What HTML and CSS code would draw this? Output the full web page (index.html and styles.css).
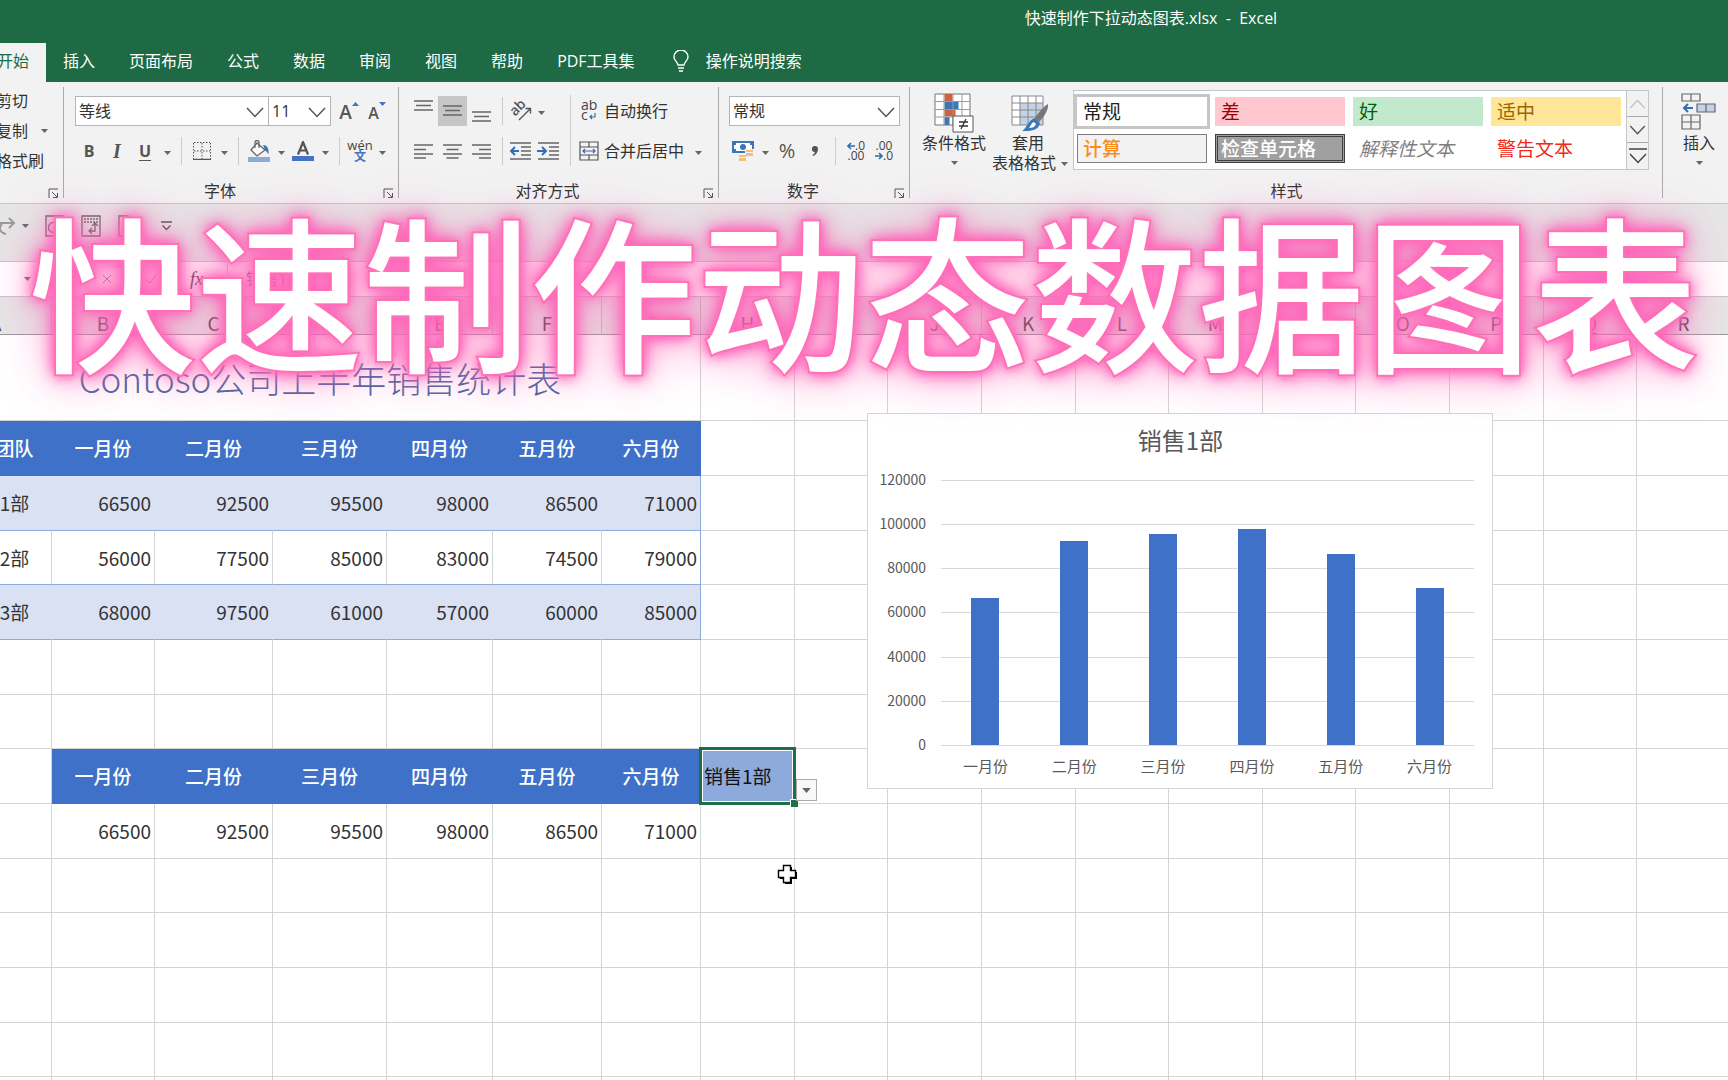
FILE: index.html
```html
<!DOCTYPE html>
<html lang="zh-CN">
<head>
<meta charset="utf-8">
<title>快速制作下拉动态图表.xlsx - Excel</title>
<link rel="stylesheet" href="styles.css">
</head>
<body>
<svg class="defs" width="0" height="0" aria-hidden="true">
  <symbol id="caret" viewBox="0 0 7 4"><path d="M0 0h7L3.500 4z" fill="#666"/></symbol>
  <symbol id="chev" viewBox="0 0 18 11"><path d="M1 1l8 8.500L17 1" fill="none" stroke="#555" stroke-width="1.500"/></symbol>
  <symbol id="launch" viewBox="0 0 11 11"><path d="M1 10V1h9M4 4l5 5M9.500 5v4.500H5" fill="none" stroke="#555"/></symbol>
</svg>

<header class="titlebar"><span>快速制作下拉动态图表.xlsx&nbsp; -&nbsp; Excel</span></header>

<nav class="tabs">
  <button class="tab active">开始</button>
  <button class="tab">插入</button>
  <button class="tab">页面布局</button>
  <button class="tab">公式</button>
  <button class="tab">数据</button>
  <button class="tab">审阅</button>
  <button class="tab">视图</button>
  <button class="tab">帮助</button>
  <button class="tab">PDF工具集</button>
  <button class="tab tell">
    <svg width="16" height="22" viewBox="0 0 16 22" fill="none" stroke="#fff" stroke-width="1.400"><path d="M5 15c0-3-4-4-4-8a7 7 0 0 1 14 0c0 4-4 5-4 8zM5 18h6M6 21h4"/></svg>
    操作说明搜索
  </button>
</nav>

<section class="ribbon">
  <div class="group clipboard">
    <div class="clip-list">
      <button>剪切</button>
      <button>复制<svg class="caret"><use href="#caret"/></svg></button>
      <button>格式刷</button>
    </div>
    <footer><span></span><button class="launch" aria-label="剪贴板设置"><svg><use href="#launch"/></svg></button></footer>
  </div>

  <div class="group font">
    <div class="body rows">
      <div class="row">
        <label class="combo name"><select aria-label="字体"><option>等线</option></select><svg><use href="#chev"/></svg></label>
        <label class="combo size"><select aria-label="字号"><option>11</option></select><svg><use href="#chev"/></svg></label>
        <button class="ib grow" aria-label="增大字号"><span class="a-big">A</span><svg width="7" height="4" viewBox="0 0 7 4"><path d="M0 4h7L3.500 0z" fill="#4472c4"/></svg></button>
        <button class="ib grow" aria-label="减小字号"><span class="a-small">A</span><svg width="7" height="4" viewBox="0 0 7 4"><path d="M0 0h7L3.500 4z" fill="#4472c4"/></svg></button>
      </div>
      <div class="row">
        <button class="ib bold">B</button>
        <button class="ib italic">I</button>
        <button class="ib underline">U</button>
        <button class="dd" aria-label="下划线样式"><svg class="caret"><use href="#caret"/></svg></button>
        <i class="sep"></i>
        <button class="ib" aria-label="边框"><svg width="18" height="18" viewBox="0 0 18 18" fill="none" stroke="#555"><path d="M1 .5h16M.5 1v16M17.500 1v16M9 1v16M1 9h16" stroke-dasharray="1.500 1.500"/><path d="M0 17.500h18" stroke-width="1.500"/></svg></button>
        <button class="dd" aria-label="边框样式"><svg class="caret"><use href="#caret"/></svg></button>
        <i class="sep"></i>
        <button class="ib" aria-label="填充颜色"><svg width="22" height="22" viewBox="0 0 22 22"><path d="M0 17h22v5H0z" fill="#8ea9db"/><path d="M9 3l8 7-8 6-6-6z" fill="#fff" stroke="#666" stroke-width="1.300"/><path d="M7 8V2.500a2 2 0 0 1 4 0V8" fill="none" stroke="#666" stroke-width="1.300"/><path d="M15 5c4 0 6 3 5.500 9-1.500-1-2-3-3.500-4z" fill="#3a76b8"/></svg></button>
        <button class="dd" aria-label="选择填充颜色"><svg class="caret"><use href="#caret"/></svg></button>
        <button class="ib" aria-label="字体颜色"><svg width="22" height="20" viewBox="0 0 22 20"><path d="M0 15h22v5H0z" fill="#4472c4"/><path d="M6 13.500L11 1l5 12.500M8 9.500h6" fill="none" stroke="#555" stroke-width="2.200"/></svg></button>
        <button class="dd" aria-label="选择字体颜色"><svg class="caret"><use href="#caret"/></svg></button>
        <i class="sep"></i>
        <button class="ib wen"><span>wén</span><b>文</b></button>
        <button class="dd" aria-label="拼音选项"><svg class="caret"><use href="#caret"/></svg></button>
      </div>
    </div>
    <footer><span>字体</span><button class="launch" aria-label="字体设置"><svg><use href="#launch"/></svg></button></footer>
  </div>

  <div class="group align">
    <div class="body">
      <div class="rows left">
        <div class="row">
          <button class="ib al" aria-label="顶端对齐"><svg width="19" height="30" viewBox="0 0 19 30" stroke="#666" stroke-width="1.400"><path d="M0 5h19M2 9.500h15M0 14h19"/></svg></button>
          <button class="ib al on" aria-label="垂直居中"><svg width="19" height="30" viewBox="0 0 19 30" stroke="#666" stroke-width="1.400"><path d="M0 10h19M2 14.500h15M0 19h19"/></svg></button>
          <button class="ib al" aria-label="底端对齐"><svg width="19" height="30" viewBox="0 0 19 30" stroke="#666" stroke-width="1.400"><path d="M0 16h19M2 20.500h15M0 25h19"/></svg></button>
          <i class="sep"></i>
          <button class="ib orient" aria-label="方向"><svg width="22" height="22" viewBox="0 0 22 22"><text x="0" y="13" transform="rotate(-45 7 9)" font-family="Open Sans" font-size="14" font-weight="600" fill="#555">ab</text><path d="M9 20L20 9M15.500 8.500H20.500V13.500" fill="none" stroke="#555" stroke-width="1.400"/></svg></button>
          <button class="dd" aria-label="方向选项"><svg class="caret"><use href="#caret"/></svg></button>
        </div>
        <div class="row">
          <button class="ib al" aria-label="左对齐"><svg width="19" height="15" viewBox="0 0 19 15" stroke="#666" stroke-width="1.400"><path d="M0 1h19M0 5.500h12M0 10h19M0 14h12"/></svg></button>
          <button class="ib al" aria-label="居中"><svg width="19" height="15" viewBox="0 0 19 15" stroke="#666" stroke-width="1.400"><path d="M0 1h19M3.500 5.500h12M0 10h19M3.500 14h12"/></svg></button>
          <button class="ib al" aria-label="右对齐"><svg width="19" height="15" viewBox="0 0 19 15" stroke="#666" stroke-width="1.400"><path d="M0 1h19M7 5.500h12M0 10h19M7 14h12"/></svg></button>
          <i class="sep"></i>
          <button class="ib indent" aria-label="减少缩进量"><svg width="22" height="18" viewBox="0 0 22 18" fill="none" stroke="#666" stroke-width="1.400"><path d="M1 1h21M12 5h10M12 9h10M12 13h10M1 17h21"/><path d="M10 9H2M6 5L2 9l4 4" stroke="#2f6fb3" stroke-width="2"/></svg></button>
          <button class="ib indent" aria-label="增加缩进量"><svg width="22" height="18" viewBox="0 0 22 18" fill="none" stroke="#666" stroke-width="1.400"><path d="M1 1h21M12 5h10M12 9h10M12 13h10M1 17h21"/><path d="M0 9h8M5 5l4 4-4 4" stroke="#2f6fb3" stroke-width="2"/></svg></button>
        </div>
      </div>
      <div class="rows right">
        <div class="row"><button class="tb"><svg width="20" height="22" viewBox="0 0 20 22"><text x="2" y="10" font-family="Open Sans" font-size="14" fill="#444">ab</text><text x="2" y="20" font-family="Open Sans" font-size="14" fill="#444">c</text><path d="M16 13v4h-5M13 15l-2 2 2 2" fill="none" stroke="#2f6fb3" stroke-width="1.200"/></svg>自动换行</button></div>
        <div class="row"><button class="tb"><svg width="20" height="20" viewBox="0 0 20 20" fill="none" stroke="#555" stroke-width="1.200"><path d="M1 1h18v18H1zM1 6h18M1 14h18M10 1v5M10 14v5"/><path d="M4 10h12M6 8l-2 2 2 2M14 8l2 2-2 2" stroke="#4a5fb0"/></svg>合并后居中</button><button class="dd" aria-label="合并选项"><svg class="caret"><use href="#caret"/></svg></button></div>
      </div>
    </div>
    <footer><span>对齐方式</span><button class="launch" aria-label="对齐设置"><svg><use href="#launch"/></svg></button></footer>
  </div>

  <div class="group number">
    <div class="body rows">
      <div class="row"><label class="combo fmt"><select aria-label="数字格式"><option>常规</option></select><svg><use href="#chev"/></svg></label></div>
      <div class="row">
        <button class="ib" aria-label="会计数字格式"><svg width="22" height="22" viewBox="0 0 22 22"><path d="M1 2h20v10H1z" fill="#fff" stroke="#3a76b8" stroke-width="2"/><circle cx="11" cy="7" r="3" fill="#3a76b8"/><path d="M1 2h3v3H1zM18 2h3v3h-3zM1 9h3v3H1z" fill="#3a76b8"/><path d="M13 9h9v8h-5v4H6v-7h7z" fill="#f2f2f2"/><path d="M14 10h7v2h-7zM14 13h7v3h-7zM7 15h7v2H7zM7 18h7v3H7z" fill="#f4bd7a"/></svg></button>
        <button class="dd" aria-label="会计格式选项"><svg class="caret"><use href="#caret"/></svg></button>
        <button class="ib pct">%</button>
        <button class="ib comma" aria-label="千位分隔样式"><svg width="8" height="10" viewBox="0 0 8 10"><path d="M4 0a3 3 0 0 1 3 3c0 3-2 6-5 7l-.5-1c1.500-.8 2.300-1.800 2.300-3A3 3 0 0 1 4 0z" fill="#555"/></svg></button>
        <i class="sep"></i>
        <button class="ib dec"><span><svg width="8" height="8" viewBox="0 0 8 8"><path d="M8 4H1M4 1L1 4l3 3" fill="none" stroke="#2f6fb3" stroke-width="1.600"/></svg>.0</span><span>.00</span></button>
        <button class="ib dec"><span>.00</span><span><svg width="8" height="8" viewBox="0 0 8 8"><path d="M0 4h7M4 1l3 3-3 3" fill="none" stroke="#2f6fb3" stroke-width="1.600"/></svg>.0</span></button>
      </div>
    </div>
    <footer><span>数字</span><button class="launch" aria-label="数字设置"><svg><use href="#launch"/></svg></button></footer>
  </div>

  <div class="group styles">
    <div class="body">
      <button class="big">
        <svg width="40" height="42" viewBox="0 0 40 42"><path d="M1 3h35v31H1z" fill="#fff" stroke="#777"/><path d="M10.500 3h8v7h-8zM10.500 18.500h11v7h-11z" fill="#d2603f"/><path d="M10.500 10.500h14v7.500h-14zM10.500 26h5v8h-5z" fill="#3a76b8"/><path d="M10 3v31M19 3v31M28 3v31M1 10.500h35M1 18.500h35M1 26h35" stroke="#999" fill="none"/><path d="M19 25h20v16H19z" fill="#fff" stroke="#555"/><path d="M25 31h9M25 35h9M32 28l-5 10" stroke="#333" stroke-width="1.300" fill="none"/></svg>
        <span>条件格式</span><svg class="caret"><use href="#caret"/></svg>
      </button>
      <button class="big wide">
        <svg width="40" height="42" viewBox="0 0 40 42"><path d="M2 5h31v29H2z" fill="#fff"/><path d="M10 12h23v22H10z" fill="#c3d2e6"/><path d="M2 5h31v29H2zM2 12h31M2 19h31M2 26h31M10 5v29M18 5v29M26 5v29" stroke="#888" fill="none"/><path d="M38 13c1 6-5 14-9 18l-4-4c3-5 8-11 13-14z" fill="#777"/><path d="M25 27l5 5c-2 8-9 8-18 8 5-3 6-11 13-13z" fill="#3a76b8"/><path d="M24 31c-3 1-3 4-5 6 3 0 6-1 7-4z" fill="#fff"/></svg>
        <span>套用</span><span class="line">表格格式<svg class="caret"><use href="#caret"/></svg></span>
      </button>
      <div class="gallery">
        <div class="tiles">
          <button class="tile normal">常规</button>
          <button class="tile bad">差</button>
          <button class="tile good">好</button>
          <button class="tile neutral">适中</button>
          <button class="tile calc">计算</button>
          <button class="tile check">检查单元格</button>
          <button class="tile note">解释性文本</button>
          <button class="tile warn">警告文本</button>
        </div>
        <div class="scroller">
          <button class="off" aria-label="上一行"><svg width="17" height="10" viewBox="0 0 18 11"><path d="M1 10l8-8.500L17 10" fill="none" stroke="#bbb" stroke-width="1.400"/></svg></button>
          <button aria-label="下一行"><svg width="17" height="10"><use href="#chev"/></svg></button>
          <button aria-label="更多样式"><svg width="18" height="17" viewBox="0 0 18 17"><path d="M0 1h18M1 6l8 8.500L17 6" fill="none" stroke="#444" stroke-width="1.500"/></svg></button>
        </div>
      </div>
    </div>
    <footer><span>样式</span></footer>
  </div>

  <div class="group cells">
    <div class="body">
      <button class="big">
        <svg width="36" height="42" viewBox="0 0 36 42" fill="none" stroke="#666" stroke-width="1.200"><path d="M1 3h18v7H1zM10 3v7M1 24h18v14H1zM1 31h18M10 24v14"/><path d="M16 13h18v8H16z" fill="#c3d2e6"/><path d="M25 13v8"/><path d="M12 17H3M7 13l-4 4 4 4" stroke="#2f6fb3" stroke-width="2"/></svg>
        <span>插入</span><svg class="caret"><use href="#caret"/></svg>
      </button>
    </div>
    <footer><span></span></footer>
  </div>
</section>

<div class="qat">
  <button class="redo" aria-label="恢复"><svg width="16" height="20" viewBox="0 0 16 20" fill="none" stroke="#999" stroke-width="2"><path d="M0 7h13M9 2l5 5-5 5M2 8c-4 4-2 9 4 10"/></svg></button>
  <svg class="caret"><use href="#caret"/></svg>
  <button aria-label="打印预览"><svg width="19" height="22" viewBox="0 0 19 22" fill="none" stroke="#666" stroke-width="1.300"><path d="M1 1h17v20H1zM12 9a5 5 0 1 0 0 7"/></svg></button>
  <button aria-label="数据透视"><svg width="20" height="22" viewBox="0 0 20 22" fill="none" stroke="#666" stroke-width="1.300"><path d="M1 1h18v20H1z"/><path d="M3 4h14M3 7h14" stroke-dasharray="2 1"/><path d="M14 9v7H8M11 13l-3 3 3 3M11 11l3-3 3 3"/></svg></button>
  <button aria-label="新建"><svg width="17" height="22" viewBox="0 0 17 22" fill="none" stroke="#666" stroke-width="1.300"><path d="M1 21V1h9l6 6v14z"/></svg></button>
  <button class="more" aria-label="自定义快速访问工具栏"><svg width="11" height="10" viewBox="0 0 11 10" fill="none" stroke="#555" stroke-width="1.400"><path d="M0 1h11M1.500 4.500l4 4 4-4"/></svg></button>
</div>

<div class="formula">
  <div class="namebox"><svg class="caret"><use href="#caret"/></svg></div>
  <div class="fx"><svg width="10" height="10" viewBox="0 0 10 10" stroke="#777"><path d="M1 1l8 8M9 1L1 9"/></svg><svg width="12" height="10" viewBox="0 0 12 10" fill="none" stroke="#777"><path d="M1 5l4 4 6-8"/></svg><em>fx</em></div>
  <input class="formula-input" aria-label="编辑栏" value="销售1部">
</div>

<main class="sheet">
  <table class="grid">
    <colgroup><col class="ca"><col class="cb"><col class="cc"><col class="cd"><col class="ce"><col class="cf"><col class="cg"><col><col><col><col><col><col><col><col><col><col><col></colgroup>
    <thead><tr><th>A</th><th>B</th><th>C</th><th>D</th><th>E</th><th>F</th><th>G</th><th>H</th><th>I</th><th>J</th><th>K</th><th>L</th><th>M</th><th>N</th><th>O</th><th>P</th><th>Q</th><th>R</th></tr></thead>
    <tbody>
      <tr class="caption"><td colspan="7">Contoso公司上半年销售统计表</td><td></td><td></td><td></td><td></td><td></td><td></td><td></td><td></td><td></td><td></td><td></td></tr>
      <tr><td class="h">销售团队</td><td class="h">一月份</td><td class="h">二月份</td><td class="h">三月份</td><td class="h">四月份</td><td class="h">五月份</td><td class="h">六月份</td><td></td><td></td><td></td><td></td><td></td><td></td><td></td><td></td><td></td><td></td><td></td></tr>
      <tr><td class="t b">销售1部</td><td class="b">66500</td><td class="b">92500</td><td class="b">95500</td><td class="b">98000</td><td class="b">86500</td><td class="b e">71000</td><td></td><td></td><td></td><td></td><td></td><td></td><td></td><td></td><td></td><td></td><td></td></tr>
      <tr><td class="t w">销售2部</td><td class="w">56000</td><td class="w">77500</td><td class="w">85000</td><td class="w">83000</td><td class="w">74500</td><td class="w e">79000</td><td></td><td></td><td></td><td></td><td></td><td></td><td></td><td></td><td></td><td></td><td></td></tr>
      <tr><td class="t b">销售3部</td><td class="b">68000</td><td class="b">97500</td><td class="b">61000</td><td class="b">57000</td><td class="b">60000</td><td class="b e">85000</td><td></td><td></td><td></td><td></td><td></td><td></td><td></td><td></td><td></td><td></td><td></td></tr>
      <tr><td></td><td></td><td></td><td></td><td></td><td></td><td></td><td></td><td></td><td></td><td></td><td></td><td></td><td></td><td></td><td></td><td></td><td></td></tr>
      <tr><td></td><td></td><td></td><td></td><td></td><td></td><td></td><td></td><td></td><td></td><td></td><td></td><td></td><td></td><td></td><td></td><td></td><td></td></tr>
      <tr><td></td><td class="h">一月份</td><td class="h">二月份</td><td class="h">三月份</td><td class="h">四月份</td><td class="h">五月份</td><td class="h">六月份</td><td class="sel">销售1部<i class="frame"></i><i class="handle"></i><button class="drop" aria-label="选择部门"><svg width="9" height="5" viewBox="0 0 7 4"><use href="#caret"/></svg></button></td><td></td><td></td><td></td><td></td><td></td><td></td><td></td><td></td><td></td><td></td></tr>
      <tr><td></td><td>66500</td><td>92500</td><td>95500</td><td>98000</td><td>86500</td><td>71000</td><td></td><td></td><td></td><td></td><td></td><td></td><td></td><td></td><td></td><td></td><td></td></tr>
      <tr><td></td><td></td><td></td><td></td><td></td><td></td><td></td><td></td><td></td><td></td><td></td><td></td><td></td><td></td><td></td><td></td><td></td><td></td></tr>
      <tr><td></td><td></td><td></td><td></td><td></td><td></td><td></td><td></td><td></td><td></td><td></td><td></td><td></td><td></td><td></td><td></td><td></td><td></td></tr>
      <tr><td></td><td></td><td></td><td></td><td></td><td></td><td></td><td></td><td></td><td></td><td></td><td></td><td></td><td></td><td></td><td></td><td></td><td></td></tr>
      <tr><td></td><td></td><td></td><td></td><td></td><td></td><td></td><td></td><td></td><td></td><td></td><td></td><td></td><td></td><td></td><td></td><td></td><td></td></tr>
      <tr><td></td><td></td><td></td><td></td><td></td><td></td><td></td><td></td><td></td><td></td><td></td><td></td><td></td><td></td><td></td><td></td><td></td><td></td></tr>
    </tbody>
  </table>

  <figure class="chart">
    <figcaption>销售1部</figcaption>
    <div class="plot">
      <div class="axis"><span>120000</span><span>100000</span><span>80000</span><span>60000</span><span>40000</span><span>20000</span><span>0</span></div>
      <div class="area">
        <div class="bars">
          <i style="height:55.4%"></i><i style="height:77.1%"></i><i style="height:79.6%"></i><i style="height:81.7%"></i><i style="height:72.1%"></i><i style="height:59.2%"></i>
        </div>
        <div class="cats"><span>一月份</span><span>二月份</span><span>三月份</span><span>四月份</span><span>五月份</span><span>六月份</span></div>
      </div>
    </div>
  </figure>

  <svg class="cursor" width="21" height="21" viewBox="0 0 21 21"><path d="M8 3h7v5h5v7h-5v5H8v-5H3V8h5z" fill="#000"/><path d="M6.500 1.500h7v5h5v7h-5v5h-7v-5h-5v-7h5z" fill="#fff" stroke="#000" stroke-width="1.400"/></svg>
</main>

<h1 class="headline">快速制作动态数据图表</h1>
</body>
</html>
```
FILE: styles.css
```css
* { box-sizing: border-box; }

body {
  margin: 0;
  height: 100vh;
  display: flex;
  flex-direction: column;
  position: relative;
  overflow: hidden;
  background: #fff;
  color: #333;
  font: 16px/20px "Open Sans", "Noto Sans CJK SC", sans-serif;
}

button, select, input {
  margin: 0;
  padding: 0;
  border: 0;
  background: none;
  color: inherit;
  font: inherit;
}

svg { flex: none; display: block; }
.defs { position: absolute; }
.caret { width: 7px; height: 4px; }

/* title and tabs */
.titlebar {
  height: 43px;
  padding: 8px 0 0 574px;
  background: #1d6a45;
  color: #fff;
  font-size: 16px;
  text-align: center;
}
.tabs {
  display: flex;
  height: 39px;
  padding: 0;
  background: #1d6a45;
}
.tab { padding: 0 17px 3px; color: #fff; white-space: nowrap; }
.tab:first-child { margin-left: -20px; }
.tab.active { background: #f2f2f2; color: #1d6a45; }
.tab.tell { display: flex; align-items: center; gap: 17px; padding-left: 21px; }

/* ribbon */
.ribbon {
  display: flex;
  height: 122px;
  background: #f2f2f2;
  border-bottom: 1px solid #c6c6c6;
}
.group {
  display: flex;
  flex-direction: column;
  flex: none;
  padding-top: 8px;
  position: relative;
}
.group::after {
  content: "";
  position: absolute;
  right: 0;
  top: 5px;
  bottom: 5px;
  width: 1px;
  background: #aaa;
}
.clipboard { width: 64px; }
.font { width: 335px; }
.align { width: 320px; }
.number { width: 191px; }
.styles { flex: 1; }
.cells { width: 65px; }
.cells::after { display: none; }

.group footer {
  display: flex;
  align-items: center;
  height: 20px;
  margin-top: 11px;
}
.group footer span { flex: 1; text-align: center; }
.launch { width: 23px; height: 20px; padding: 4px 0 0 7px; }
.launch svg { width: 11px; height: 11px; }

.clip-list {
  display: flex;
  flex-direction: column;
  height: 80px;
  margin-left: -4px;
}
.clip-list button {
  display: flex;
  flex: none;
  align-items: center;
  gap: 13px;
  height: 30px;
  padding-bottom: 8px;
  white-space: nowrap;
}

.body { display: flex; height: 80px; }
.rows { display: flex; flex-direction: column; gap: 6px; padding-top: 4px; }
.row { display: flex; align-items: center; height: 34px; }
.font .body { padding-left: 11px; }
.number .body { padding-left: 10px; }
.align .left { width: 172px; padding-left: 10px; position: relative; }
.align .left::after {
  content: "";
  position: absolute;
  right: 0;
  top: 5px;
  bottom: 4px;
  width: 1px;
  background: #ccc;
}
.align .right { padding-left: 8px; }

.combo {
  position: relative;
  display: block;
  height: 30px;
  border: 1px solid #b5b5b5;
  background: #fff;
}
.combo select { width: 100%; height: 28px; padding-left: 3px; appearance: none; }
.combo svg { position: absolute; right: 4px; top: 10px; width: 18px; height: 11px; pointer-events: none; }
.combo.name { width: 194px; }
.combo.size { width: 63px; margin: 0 4px 0 -1px; }
.combo.fmt { width: 171px; }

.ib { display: flex; align-items: center; justify-content: center; width: 28px; height: 30px; color: #555; }
.ib.al { width: 29px; }
.ib.on { background: #c6c6c6; }
.ib.orient { width: 24px; }
.ib.orient svg { overflow: visible; }
.ib.indent { justify-content: flex-start; }
.dd { display: flex; align-items: center; justify-content: center; width: 16px; height: 30px; padding-top: 3px; }
.sep { width: 1px; height: 28px; margin: 0 6px; background: #ccc; }
.tb { display: flex; align-items: center; gap: 5px; margin-right: 6px; white-space: nowrap; }

.grow { align-items: flex-start; }
.grow svg { margin-top: 6px; }
.a-big { font-size: 19px; font-weight: 600; line-height: 32px; }
.a-small { font-size: 16px; font-weight: 600; line-height: 34px; }
.bold { font-weight: 700; }
.italic { font: italic 700 20px "Liberation Serif", serif; }
.underline { font-weight: 700; text-decoration: underline; text-underline-offset: 3px; }
.wen { flex-direction: column; font-size: 13px; line-height: 12px; color: #444; }
.wen b { color: #4472c4; font-size: 12px; }
.pct { font-size: 20px; }
.dec { flex-direction: column; align-items: center; font-size: 12px; line-height: 10px; color: #444; }
.dec span { display: flex; align-items: center; }

.big { display: flex; flex-direction: column; align-items: center; width: 64px; padding-top: 1px; white-space: nowrap; }
.big .caret { margin-top: 8px; }
.big.wide { width: 76px; margin: 0 5px 0 6px; }
.big.wide > span:not(.line) { padding-right: 4px; }
.line { display: flex; align-items: center; gap: 5px; }
.big .line .caret { margin-top: 2px; }
.big > span { line-height: 20px; }
.styles .body { padding-left: 12px; padding-right: 14px; }
.cells .body { padding-left: 7px; }

.gallery { display: flex; flex: 1; background: #fff; border: 1px solid #c6c6c6; }
.tiles {
  flex: 1;
  display: grid;
  grid-template-columns: repeat(4, 1fr);
  grid-template-rows: 29px 29px;
  gap: 8px;
  padding: 6px 5px 6px 3px;
}
.tile { padding: 0 6px; font-size: 19px; line-height: 26px; text-align: left; color: #222; white-space: nowrap; }
.normal { outline: 3px solid #c6c6c6; }
.bad { background: #ffc7ce; color: #9c0006; }
.good { background: #c2e9cc; color: #006100; }
.neutral { background: #ffe699; color: #9c6500; }
.calc { background: #f2f2f2; border: 1px solid #7f7f7f; color: #fa8d1a; font-weight: 500; line-height: 24px; padding-left: 5px; }
.check { background: #a0a0a0; border: 3px double #3f3f3f; color: #fff; font-weight: 500; line-height: 20px; padding-left: 3px; }
.note { color: #7f7f7f; font-style: italic; }
.warn { color: #f02a1a; }
.scroller { display: grid; grid-template-rows: 1fr 1fr 1fr; width: 22px; background: #f2f2f2; border-left: 1px solid #c6c6c6; }
.scroller button { display: grid; place-items: center; border-bottom: 1px solid #aaa; }
.scroller button:last-child { border-bottom: 0; }

/* quick access and formula bars */
.qat {
  display: flex;
  align-items: center;
  height: 58px;
  padding-bottom: 14px;
  background: #e6e6e6;
  border-bottom: 1px solid #c6c6c6;
}
.qat > .caret { margin: 0 16px 0 6px; }
.qat button { margin-right: 17px; }
.qat .redo { margin-right: 0; }
.qat .more { margin-left: 9px; }
.formula { display: flex; align-items: center; height: 35px; border-bottom: 1px solid #c6c6c6; }
.namebox { width: 50px; padding-left: 24px; }
.fx { display: flex; align-items: center; gap: 33px; width: 178px; height: 34px; padding-left: 52px; border-right: 1px solid #d0d0d0; }
.fx em { font: italic 18px "Liberation Serif", serif; }
.formula-input { flex: 1; padding-left: 18px; color: #444; }

/* worksheet */
.sheet { flex: 1; min-height: 0; position: relative; overflow: hidden; font-family: "Noto Sans CJK SC", sans-serif; }
.grid {
  width: calc(100% + 63px);
  margin-left: -60px;
  table-layout: fixed;
  border-collapse: separate;
  border-spacing: 0;
  font-size: 19px;
  line-height: 24px;
}
.ca { width: 112px; }
.cb { width: 103px; }
.cc { width: 118px; }
.cd { width: 114px; }
.ce { width: 106px; }
.cf { width: 109px; }
.cg { width: 99px; }
.grid th {
  height: 38px;
  padding: 15px 0 0;
  background: #e6e6e6;
  border-right: 1px solid #c0c0c0;
  border-bottom: 1px solid #999;
  color: #444;
  font-weight: 400;
  line-height: 22px;
}
.grid td {
  height: 55px;
  padding: 0 3px 0 0;
  border-right: 1px solid #d4d4d4;
  border-bottom: 1px solid #d4d4d4;
  text-align: right;
  white-space: nowrap;
}
.grid tr:nth-child(3n+1) td { height: 54px; }
.grid tr.caption:first-child td { height: 86px; }
.grid .caption td:first-child {
  padding: 0;
  text-align: center;
  color: #4a66a0;
  font-size: 35px;
  line-height: 40px;
  font-weight: 300;
}
.grid td.h { padding-right: 0; background: #4071c8; border-color: #4071c8; color: #fff; text-align: center; font-weight: 500; }
.grid td.t { padding-right: 0; text-align: center; }
.grid td.b { background: #d9e1f3; border-right-color: #d9e1f3; border-bottom-color: #8ea9db; }
.grid td.w { border-bottom-color: #8ea9db; }
.grid td.e { border-right-color: #8ea9db; }
.grid td.sel { position: relative; padding-left: 3px; background: #8ea9db; text-align: left; color: #111; }
.frame { position: absolute; inset: -2px; border: 3px solid #1f6e4a; box-shadow: inset 0 0 0 1px #fff; }
.handle { position: absolute; right: -4px; bottom: -4px; width: 8px; height: 8px; background: #1f6e4a; border: 1px solid #fff; border-width: 1px 0 0 1px; }
.drop {
  position: absolute;
  left: calc(100% + 2px);
  bottom: 2px;
  display: grid;
  place-items: center;
  width: 21px;
  height: 22px;
  border: 1px solid #aaa;
  background: #f8f8f8;
}

.chart {
  position: absolute;
  left: 867px;
  top: 116px;
  width: 626px;
  height: 376px;
  margin: 0;
  padding: 10px 18px 0 0;
  background: #fff;
  border: 1px solid #d4d4d4;
  color: #595959;
}
.chart figcaption { padding-left: 19px; font-size: 24px; line-height: 32px; text-align: center; }
.plot { display: flex; margin-top: 14px; font-size: 14px; line-height: 18px; }
.axis {
  display: flex;
  flex-direction: column;
  justify-content: space-between;
  width: 58px;
  height: 283px;
  margin-right: 15px;
  text-align: right;
}
.area { flex: 1; padding-top: 10px; }
.bars {
  display: grid;
  grid-template-columns: repeat(6, 1fr);
  align-items: end;
  justify-items: center;
  height: 266px;
  border-bottom: 1px solid #d9d9d9;
  background: repeating-linear-gradient(#d9d9d9 0 1px, transparent 1px calc(100% / 6));
}
.bars i { width: 28px; background: #4071c8; }
.cats { display: grid; grid-template-columns: repeat(6, 1fr); padding-top: 10px; font-size: 15px; line-height: 20px; text-align: center; }

.cursor { position: absolute; left: 777px; top: 567px; }

/* glowing headline over the window */
.headline {
  position: absolute;
  left: 0;
  right: 0;
  top: 192px;
  margin: 0;
  color: #fff;
  font: 500 167px/190px "Noto Sans CJK SC", sans-serif;
  text-align: center;
  white-space: nowrap;
  pointer-events: none;
  -webkit-text-stroke: 4px #ff8cb4;
  paint-order: stroke fill;
  text-shadow:
    0 0 5px #ff80b6,
    0 0 12px #ff66ba,
    0 0 16px #ff60ba,
    0 0 22px #ff60ba,
    0 2px 50px #ff69b4;
}
```
